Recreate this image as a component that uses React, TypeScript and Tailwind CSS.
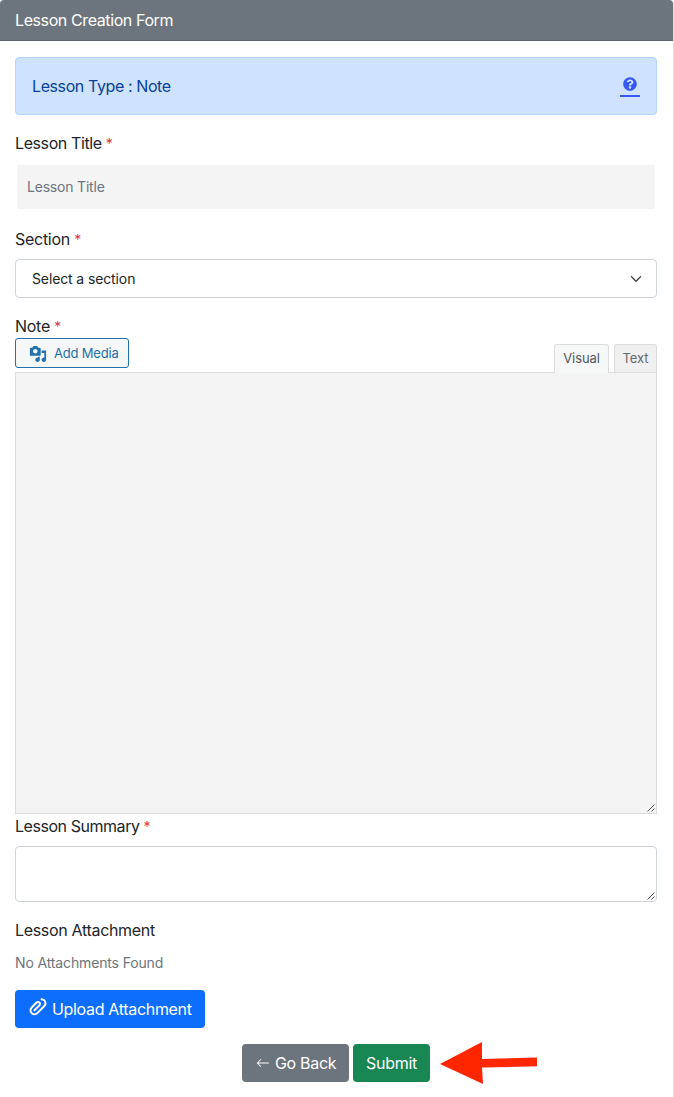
import type { ReactNode } from 'react';
import { BsArrowLeft, BsChevronDown } from 'react-icons/bs';
import { FaQuestionCircle } from 'react-icons/fa';

function MediaIcon() {
  return (
    <svg viewBox="0 0 20 20" className="h-[18px] w-[18px] shrink-0" fill="currentColor">
      <path d="M13 11V4c0-.55-.45-1-1-1h-1.67L9 1H5L3.67 3H2c-.55 0-1 .45-1 1v7c0 .55.45 1 1 1h10c.55 0 1-.45 1-1zM7 4.5c1.38 0 2.5 1.12 2.5 2.5S8.38 9.5 7 9.5 4.5 8.38 4.5 7 5.62 4.5 7 4.5zM14 6h5v10.5c0 1.38-1.12 2.5-2.5 2.5S14 17.88 14 16.5s1.12-2.5 2.5-2.5c.17 0 .34.02.5.05V9h-3V6zm-4 8.05V13h2v3.5c0 1.38-1.12 2.5-2.5 2.5S7 17.88 7 16.5 8.12 14 9.5 14c.17 0 .34.02.5.05z" />
    </svg>
  );
}

function PaperclipIcon() {
  return (
    <svg viewBox="0 0 20 20" className="-mt-1 h-5 w-5 shrink-0" fill="currentColor">
      <path d="M17.05 2.7c1.93 1.94 1.93 5.13 0 7.07L10 16.84c-1.88 1.89-4.91 1.93-6.86.15-.06-.05-.13-.09-.19-.15-1.93-1.94-1.93-5.12 0-7.07l4.94-4.95c.91-.92 2.28-1.1 3.39-.58.3.15.59.33.83.58 1.17 1.17 1.17 3.07 0 4.24l-4.93 4.95c-.39.39-1.02.39-1.41 0s-.39-1.02 0-1.41l4.93-4.95c.39-.39.39-1.02 0-1.41-.38-.39-1.02-.39-1.4 0l-4.94 4.95c-.91.92-1.1 2.29-.57 3.4.14.3.32.59.57.84s.54.43.84.57c1.11.53 2.47.35 3.39-.57l7.05-7.07c1.16-1.17 1.16-3.08 0-4.25-.56-.55-1.28-.83-2-.86-.08.01-.16.01-.24 0-.22-.03-.43-.11-.6-.27-.39-.4-.38-1.05.02-1.45.16-.16.36-.24.56-.28.14-.02.27-.01.4.02 1.19.06 2.36.52 3.27 1.43z" />
    </svg>
  );
}

function ResizeGrip() {
  return (
    <svg viewBox="0 0 8 8" className="absolute right-px bottom-px h-2 w-2" stroke="#555" strokeWidth="1" fill="none">
      <path d="M0.5 7.5 7.5 0.5M4.5 7.5 7.5 4.5" />
    </svg>
  );
}

function Label({ children, required }: { children: ReactNode; required?: boolean }) {
  return (
    <div className="h-6 leading-6">
      {children}
      {required && <span className="text-[#dc3545]"> <span className="text-[14px]">*</span></span>}
    </div>
  );
}

export default function App() {
  return (
    <div className="h-[1097px] w-[674px] overflow-hidden bg-white font-['Inter',sans-serif] text-base tracking-[-0.4px] text-[#212529]">
      <div className="h-full rounded-t border-r border-[#dfdfdf]">
        <header className="h-[41px] rounded-t border-b border-[#5c636a] bg-[#6c757d] pl-[15px] leading-10 text-white">
          Lesson Creation Form
        </header>
        <main className="flex flex-col pt-4 pr-4 pl-[15px]">
          <div className="flex h-[58px] items-center justify-between rounded border border-[#b6d4fe] bg-[#cfe2ff] px-4 text-[#084298]">
            <span>Lesson Type : Note</span>
            <span className="mt-0.5 flex h-5 w-5 justify-center border-b-2 border-[#3858f6] text-[#3858f6]">
              <FaQuestionCircle className="h-[14px] w-[14px]" />
            </span>
          </div>

          <div className="mt-4"><Label required>Lesson Title</Label></div>
          <div className="mx-0.5 mt-[10px] h-11 rounded-xs bg-[#f4f4f4] px-[10px] text-sm leading-[44px] tracking-[-0.2px] text-[#6c757d]">
            Lesson Title
          </div>

          <div className="mt-[18px] tracking-[-0.28px]"><Label required>Section</Label></div>
          <div className="mt-2 flex h-[39px] items-center justify-between rounded border border-[#ced4da] pr-[14px] pl-4 text-sm tracking-[-0.12px]">
            <span>Select a section</span>
            <BsChevronDown className="h-3 w-3" stroke="currentColor" strokeWidth="0.8" />
          </div>

          <div className="mt-4 tracking-[-0.28px]"><Label required>Note</Label></div>
          <div className="flex h-[34px] items-start justify-between text-[13px] tracking-[-0.1px]">
            <button className="flex h-[30px] w-[114px] items-center gap-[7px] rounded-[3px] border border-[#2271b1] bg-[#f6f7f7] pt-px pl-[13px] tracking-[-0.2px] text-[#2271b1]">
              <MediaIcon />
              <span className="pt-px">Add Media</span>
            </button>
            <div className="relative z-10 mt-[6px] flex gap-[5px]">
              <div className="h-[29px] w-[55px] rounded-t-[3px] border border-b-0 border-[#dcdcde] bg-[#f6f7f7] text-center leading-[27px] text-[#50575e]">Visual</div>
              <div className="h-[28px] w-[43px] rounded-t-[3px] border border-b-0 border-[#dcdcde] bg-[#f0f0f1] text-center leading-[27px] text-[#646970]">Text</div>
            </div>
          </div>
          <div className="relative h-[442px] border border-[#dcdcde] bg-[#f4f4f4]"><ResizeGrip /></div>

          <div className="tracking-[-0.45px]"><Label required>Lesson Summary</Label></div>
          <div className="relative mt-2 h-14 rounded border border-[#ced4da]"><ResizeGrip /></div>

          <div className="mt-4 tracking-[-0.32px]"><Label>Lesson Attachment</Label></div>
          <div className="mt-[10px] h-[21px] text-sm leading-[21px] tracking-[-0.14px] text-[#6c757d]">No Attachments Found</div>
          <button className="mt-[17px] flex h-[38px] w-[190px] items-center gap-1 rounded bg-[#0d6efd] pl-[13px] tracking-[-0.32px] text-white">
            <PaperclipIcon />
            <span>Upload Attachment</span>
          </button>

          <div className="mt-4 ml-[227px] flex items-start gap-1 tracking-[-0.32px] text-white">
            <button className="flex h-[38px] w-[107px] items-center gap-[5px] rounded bg-[#6c757d] pl-[14px]">
              <BsArrowLeft className="h-[14px] w-[14px] shrink-0" />
              <span>Go Back</span>
            </button>
            <button className="h-[38px] w-[77px] rounded bg-[#198754] tracking-[-0.25px]">Submit</button>
            <svg viewBox="0 0 97 42" className="-mt-[2px] ml-[6px] h-[42px] w-[97px]" fill="#ff2600">
              <path d="M0 22 42 0V17L97 15.5V24.3L42 25.5 43 42Z" />
            </svg>
          </div>
        </main>
      </div>
    </div>
  );
}
